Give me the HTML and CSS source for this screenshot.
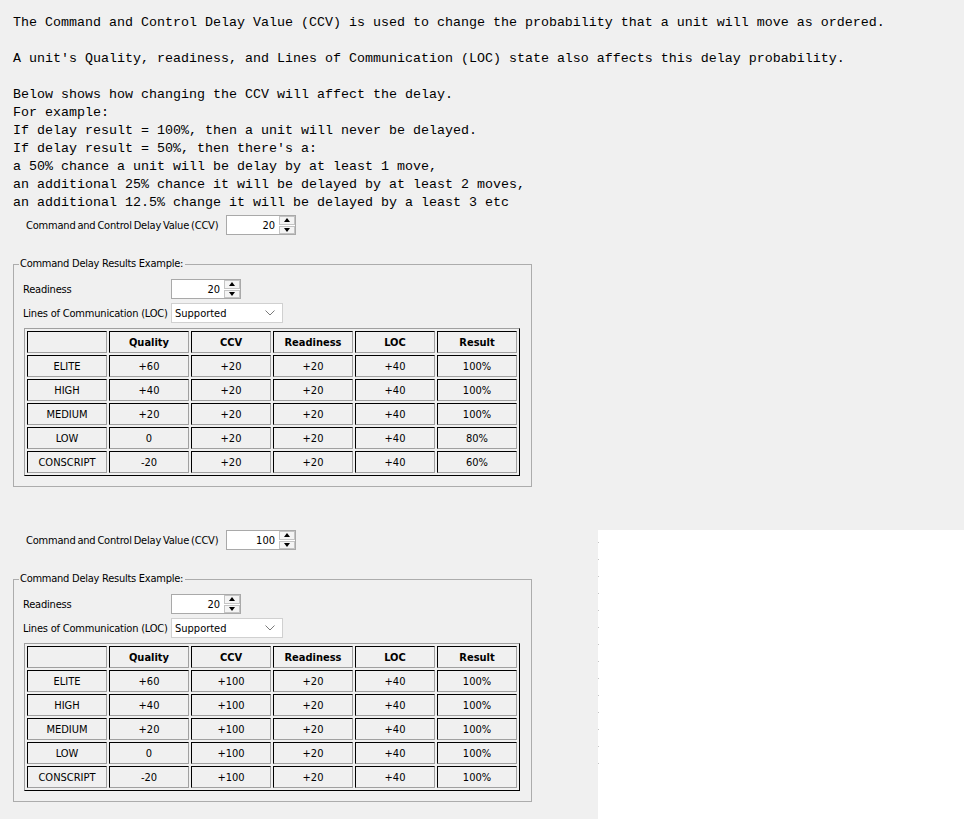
FILE: index.html
```html
<!DOCTYPE html>
<html lang="en">
<head>
    <meta charset="UTF-8">
    <title>Command Delay</title>
    <link rel="stylesheet" href="styles.css">
</head>
<body>
<pre class="intro">The Command and Control Delay Value (CCV) is used to change the probability that a unit will move as ordered.

A unit's Quality, readiness, and Lines of Communication (LOC) state also affects this delay probability.

Below shows how changing the CCV will affect the delay.
For example:
If delay result = 100%, then a unit will never be delayed.
If delay result = 50%, then there's a:
a 50% chance a unit will be delay by at least 1 move,
an additional 25% chance it will be delayed by at least 2 moves,
an additional 12.5% change it will be delayed by a least 3 etc</pre>

<!-- first example: CCV 20 -->
<div class="section">
    <div class="ccv-row">
        <label>Command and Control Delay Value (CCV)</label>
        <div class="spinner"><span class="spin-value">20</span><span class="spin-btns"><span class="spin-up"></span><span class="spin-down"></span></span></div>
    </div>
    <fieldset class="results">
        <legend>Command Delay Results Example:</legend>
        <div class="controls">
            <label>Readiness</label>
            <div class="spinner"><span class="spin-value">20</span><span class="spin-btns"><span class="spin-up"></span><span class="spin-down"></span></span></div>
            <label>Lines of Communication (LOC)</label>
            <div class="combo"><span>Supported</span><svg width="10" height="6" viewBox="0 0 10 6"><polyline points="0.5,0.5 5,5 9.5,0.5" fill="none" stroke="#7a7a7a" stroke-width="1"/></svg></div>
        </div>
        <table class="grid">
            <tr><th></th><th>Quality</th><th>CCV</th><th>Readiness</th><th>LOC</th><th>Result</th></tr>
            <tr><td>ELITE</td><td>+60</td><td>+20</td><td>+20</td><td>+40</td><td>100%</td></tr>
            <tr><td>HIGH</td><td>+40</td><td>+20</td><td>+20</td><td>+40</td><td>100%</td></tr>
            <tr><td>MEDIUM</td><td>+20</td><td>+20</td><td>+20</td><td>+40</td><td>100%</td></tr>
            <tr><td>LOW</td><td>0</td><td>+20</td><td>+20</td><td>+40</td><td>80%</td></tr>
            <tr><td>CONSCRIPT</td><td>-20</td><td>+20</td><td>+20</td><td>+40</td><td>60%</td></tr>
        </table>
    </fieldset>
</div>

<!-- second example: CCV 100, with the blank panel beside it -->
<div class="second">
    <div class="section">
        <div class="ccv-row">
            <label>Command and Control Delay Value (CCV)</label>
            <div class="spinner"><span class="spin-value">100</span><span class="spin-btns"><span class="spin-up"></span><span class="spin-down"></span></span></div>
        </div>
        <fieldset class="results">
            <legend>Command Delay Results Example:</legend>
            <div class="controls">
                <label>Readiness</label>
                <div class="spinner"><span class="spin-value">20</span><span class="spin-btns"><span class="spin-up"></span><span class="spin-down"></span></span></div>
                <label>Lines of Communication (LOC)</label>
                <div class="combo"><span>Supported</span><svg width="10" height="6" viewBox="0 0 10 6"><polyline points="0.5,0.5 5,5 9.5,0.5" fill="none" stroke="#7a7a7a" stroke-width="1"/></svg></div>
            </div>
            <table class="grid">
                <tr><th></th><th>Quality</th><th>CCV</th><th>Readiness</th><th>LOC</th><th>Result</th></tr>
                <tr><td>ELITE</td><td>+60</td><td>+100</td><td>+20</td><td>+40</td><td>100%</td></tr>
                <tr><td>HIGH</td><td>+40</td><td>+100</td><td>+20</td><td>+40</td><td>100%</td></tr>
                <tr><td>MEDIUM</td><td>+20</td><td>+100</td><td>+20</td><td>+40</td><td>100%</td></tr>
                <tr><td>LOW</td><td>0</td><td>+100</td><td>+20</td><td>+40</td><td>100%</td></tr>
                <tr><td>CONSCRIPT</td><td>-20</td><td>+100</td><td>+20</td><td>+40</td><td>100%</td></tr>
            </table>
        </fieldset>
    </div>
    <div class="blank-panel"></div>
</div>
</body>
</html>
```

FILE: styles.css
```css
body{
    margin: 0;
    background-color: #f0f0f0;
    color: #000;
    font-family: "DejaVu Sans Condensed", "DejaVu Sans", sans-serif;
    font-stretch: condensed;
    font-size: 11px;
    overflow: hidden;
}
/*texto de arriba en monoespaciado*/
.intro{
    margin: 0;
    padding: 14px 0 0 13px;
    font-family: "Liberation Mono", "Courier New", monospace;
    font-stretch: normal;
    font-size: 13.33px;
    line-height: 18px;
}
.section{
    width: 598px;
}
.ccv-row{
    display: flex;
    align-items: center;
    gap: 5px;
    margin-top: 3px;
    padding-left: 26px;
    height: 20px;
}
.ccv-row label{
    flex-shrink: 0;
    width: 195px;
    white-space: nowrap;
    letter-spacing: -0.2px;
    word-spacing: -1px;
}
.second{
    display: flex;
    align-items: flex-start;
    margin-top: 43px;
}
.second .ccv-row{
    margin-top: 0;
}
.spinner{
    box-sizing: border-box;
    width: 70px;
    height: 20px;
    border: 1px solid #a9a9a9;
    background-color: #fff;
    display: flex;
    align-items: center;
}
.spin-value{
    flex: 1;
    text-align: right;
    padding-right: 4px;
}
.spin-btns{
    display: flex;
    flex-direction: column;
    width: 16px;
    height: 18px;
    gap: 1px;
}
.spin-up, .spin-down{
    flex: 1;
    box-sizing: border-box;
    border: 1px solid #c4c4c4;
    background-color: #f4f4f4;
    display: flex;
    align-items: center;
    justify-content: center;
}
.spin-up::after{
    content: "";
    border-left: 3px solid transparent;
    border-right: 3px solid transparent;
    border-bottom: 4px solid #000;
}
.spin-down::after{
    content: "";
    border-left: 3px solid transparent;
    border-right: 3px solid transparent;
    border-top: 4px solid #000;
}
/*cuadro con titulo*/
.results{
    box-sizing: border-box;
    width: 519px;
    margin: 22px 0 0 13px;
    padding: 0 9px 10px 9px;
    border: 1px solid #acacac;
}
.results legend{
    margin-left: -4px;
    padding: 0 2px 0 1px;
    line-height: 14px;
    letter-spacing: -0.25px;
}
.controls{
    display: grid;
    grid-template-columns: 148px auto;
    row-gap: 4px;
    align-items: center;
    justify-items: start;
    margin-top: 8px;
}
.controls label{
    white-space: nowrap;
    letter-spacing: -0.2px;
}
.combo{
    box-sizing: border-box;
    width: 112px;
    height: 20px;
    border: 1px solid #d0d0d0;
    background-color: #fff;
    display: flex;
    align-items: center;
    justify-content: space-between;
    padding: 0 7px 0 3px;
}
.grid{
    margin: 5px 0 0 1px;
    border-collapse: separate;
    border-spacing: 2px;
    border: 1px solid;
    border-color: #a0a0a0 #000 #000 #a0a0a0;
}
.grid th, .grid td{
    box-sizing: border-box;
    width: 80px;
    height: 22px;
    padding: 0;
    text-align: center;
    border: 1px solid;
    border-color: #000 #a0a0a0 #a0a0a0 #000;
}
.grid th{
    font-weight: bold;
}
.blank-panel{
    flex: 1;
    height: 289px;
    background-color: #fff;
    background-image: repeating-linear-gradient(to bottom, transparent 0 12px, #c4c4c4 12px 13px, transparent 13px 17px);
    background-size: 1px 234px;
    background-repeat: no-repeat;
}
```
